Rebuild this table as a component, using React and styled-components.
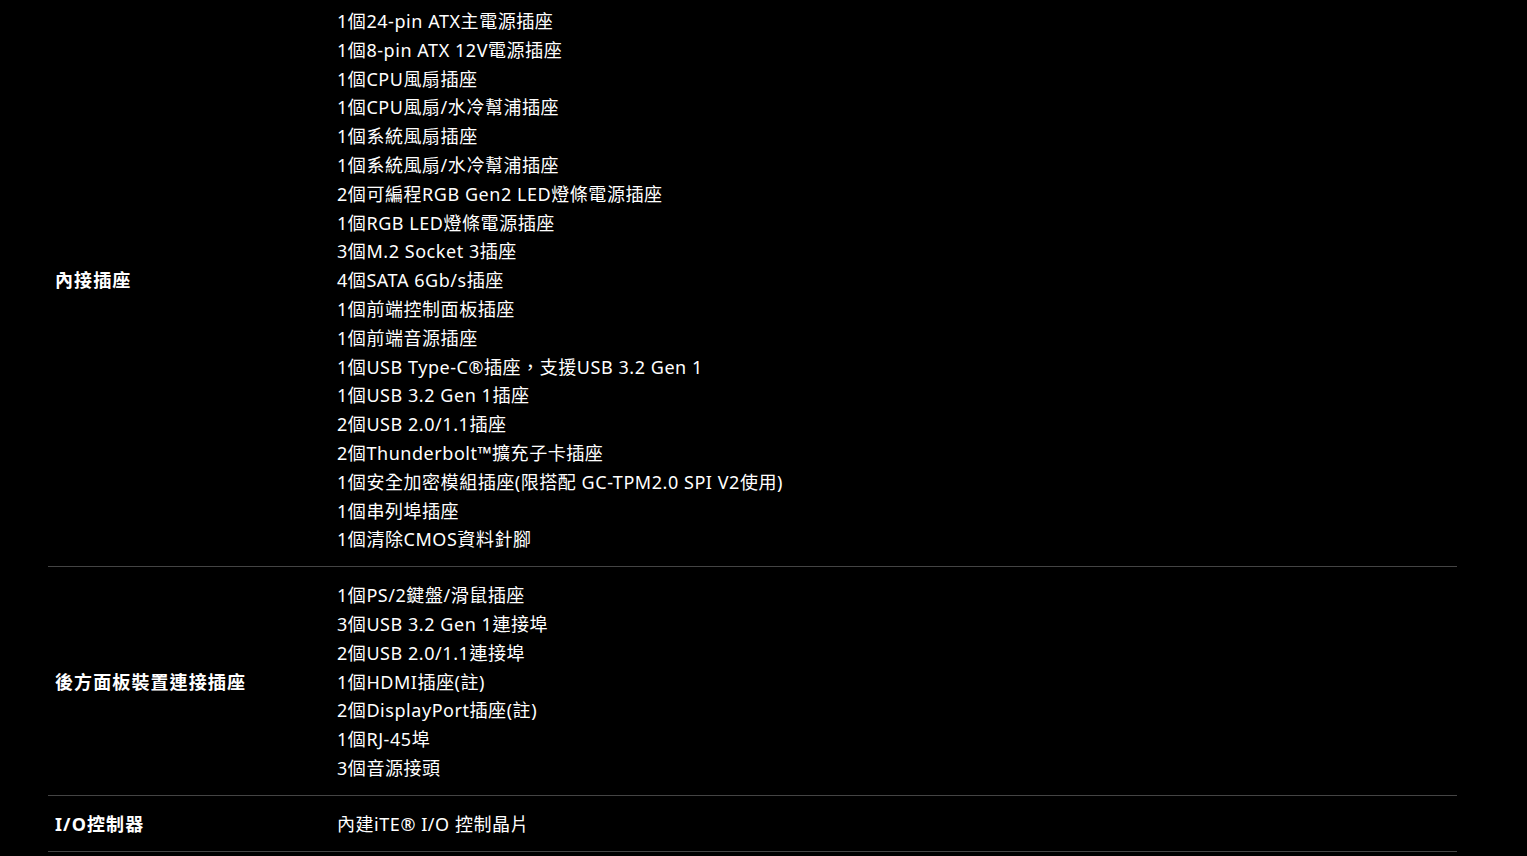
import styled, { createGlobalStyle } from "styled-components";

const GlobalStyle = createGlobalStyle`
  html, body {
    margin: 0;
    padding: 0;
    background: #000;
  }
  body {
    font-family: "Noto Sans", "Noto Sans CJK TC", sans-serif;
    color: #fff;
  }
`

const Page = styled.main`
  padding: 0 70px 0 48px;
  background: #000;
  min-height: 856px;
`

const SpecTable = styled.section`
  display: flex;
  flex-direction: column;
  width: 1409px;
`

const Row = styled.div`
  display: grid;
  grid-template-columns: 289px 1fr;
  align-items: center;
  padding: ${(props) => (props.first ? "7px" : "14px")} 0 12px;
  border-bottom: solid 1px #444;
`

const Label = styled.div`
  padding-left: 7px;
  font-size: 18px;
  font-weight: 700;
  line-height: 1.6;
  letter-spacing: 1.1px;
`

const Values = styled.ul`
  list-style: none;
  margin: 0;
  padding: 0;
`

const Item = styled.li`
  font-size: 18px;
  line-height: 28.8px;
  letter-spacing: 0.55px;
  white-space: nowrap;
`

const specs = [
  {
    label: "內接插座",
    items: [
      "1個24-pin ATX主電源插座",
      "1個8-pin ATX 12V電源插座",
      "1個CPU風扇插座",
      "1個CPU風扇/水冷幫浦插座",
      "1個系統風扇插座",
      "1個系統風扇/水冷幫浦插座",
      "2個可編程RGB Gen2 LED燈條電源插座",
      "1個RGB LED燈條電源插座",
      "3個M.2 Socket 3插座",
      "4個SATA 6Gb/s插座",
      "1個前端控制面板插座",
      "1個前端音源插座",
      "1個USB Type-C®插座，支援USB 3.2 Gen 1",
      "1個USB 3.2 Gen 1插座",
      "2個USB 2.0/1.1插座",
      "2個Thunderbolt™擴充子卡插座",
      "1個安全加密模組插座(限搭配 GC-TPM2.0 SPI V2使用)",
      "1個串列埠插座",
      "1個清除CMOS資料針腳",
    ],
  },
  {
    label: "後方面板裝置連接插座",
    items: [
      "1個PS/2鍵盤/滑鼠插座",
      "3個USB 3.2 Gen 1連接埠",
      "2個USB 2.0/1.1連接埠",
      "1個HDMI插座(註)",
      "2個DisplayPort插座(註)",
      "1個RJ-45埠",
      "3個音源接頭",
    ],
  },
  {
    label: "I/O控制器",
    items: ["內建iTE® I/O 控制晶片"],
  },
]

const App = () => {
  return (
    <>
      <GlobalStyle />
      <Page>
        <SpecTable>
          {specs.map((spec, i) => (
            <Row key={spec.label} first={i === 0}>
              <Label>{spec.label}</Label>
              <Values>
                {spec.items.map((item) => (
                  <Item key={item}>{item}</Item>
                ))}
              </Values>
            </Row>
          ))}
        </SpecTable>
      </Page>
    </>
  )
}

export default App;
